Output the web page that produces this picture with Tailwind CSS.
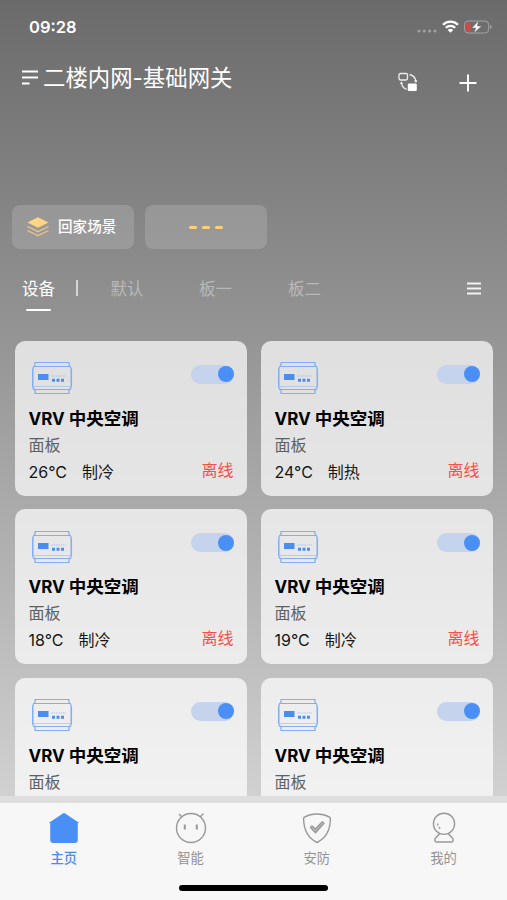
<!DOCTYPE html>
<html lang="zh-CN">
	<head>
		<meta charset="UTF-8" />
		<meta name="viewport" content="width=device-width, initial-scale=1.0" />
		<title>主页</title>

		<script src="https://cdn.jsdelivr.net/npm/@tailwindcss/browser@4"></script>
		<script>
			document.addEventListener('DOMContentLoaded', () => {
				const list = document.getElementById('list')

				const devices = [
					{ temp: '26°C', mode: '制冷' },
					{ temp: '24°C', mode: '制热' },
					{ temp: '18°C', mode: '制冷' },
					{ temp: '19°C', mode: '制冷' },
					{},
					{},
				]

				devices.forEach((i) => {
					let li = document.createElement('li')
					li.className =
						'h-[155px] rounded-[10px] bg-white/70 pl-[14px] pr-[13px] pt-5'

					li.innerHTML = `
						<div class="flex h-[45px] items-start justify-between">
							<svg class="ml-[3px] mt-[.5px] h-[34px] w-[41px]" viewBox="0 0 41 34" fill="none" stroke="#82aef5" stroke-width="1.1">
								<path d="M3 5.5V1.5H37V5.5M3 28.5V32.5H37V28.5M1.5 5.5H38.500L39.500 9V25L38.500 28.500H1.500L.5 25V9Z" />
								<path d="M3.500 1.500L1.500 6.500V25L3.500 32M36.500 1.500L38.500 6.500V25L36.500 32M1.500 25.500H38.500" stroke-width=".8" opacity=".6" />
								<path d="M6 13h10.500v6H6z" fill="#4b8cf0" stroke="none" />
								<path d="M19.500 15H34" stroke-dasharray="1.500 .8" opacity=".6" />
								<path d="M20 17.800h3v3h-3zM24.500 17.800h3v3h-3zM29 17.800h3v3h-3z" fill="#4b8cf0" stroke="none" />
							</svg>
							<div class="mt-1 flex h-[19px] w-[43px] items-center justify-end rounded-full bg-[#c6d3ec]">
								<span class="size-4 rounded-full bg-[#4a8ff5]"></span>
							</div>
						</div>
						<p class="h-[26px] text-[17.5px] leading-[25px] font-bold text-black"><span class="mr-[4px] text-[17px]">VRV</span><span>中央空调</span></p>
						<p class="h-[26px] text-base leading-[26px] text-[#606060]">面板</p>
						${
							i.temp
								? `<div class="flex h-[26px] justify-between pt-px text-base leading-[26px] text-[#151515]">
									<p><span class="mr-[15px]">${i.temp}</span>${i.mode}</p>
									<p class="-mt-[2px] text-[#f5504a]">离线</p>
								</div>`
								: ''
						}`

					list.appendChild(li)
				})
			})
		</script>
	</head>
	<body
		class="flex h-[900px] w-[507px] flex-col overflow-hidden bg-linear-to-b from-[#6b6b6b] to-[#dfdfdf] font-['Inter','Noto_Sans_CJK_SC',sans-serif] text-white"
	>
		<!-- status bar -->
		<div class="flex h-[54px] shrink-0 items-center justify-between pl-[29px] pr-[15px]">
			<span class="text-[16.500px] font-semibold">09:28</span>
			<div class="flex items-center">
				<svg class="mt-[7px] mr-[5px] h-1 w-5" viewBox="0 0 20 4" fill="#a0a0a0">
					<circle cx="2" cy="2" r="1.6" />
					<circle cx="7.300" cy="2" r="1.6" />
					<circle cx="12.600" cy="2" r="1.6" />
					<circle cx="18" cy="2" r="1.6" />
				</svg>
				<svg class="-mt-[2px] h-[13px] w-[17px]" viewBox="0 0 17 13" fill="none" stroke="#fff" stroke-width="2.300">
					<path d="M1 4.800C5.200.6 11.800.6 16 4.800M3.800 7.800C6.400 5.200 10.600 5.200 13.200 7.800" />
					<path d="M5.700 9.900C7.300 8.400 9.700 8.400 11.300 9.900L8.500 12.800Z" fill="#fff" stroke="none" />
				</svg>
				<svg class="ml-[5px] h-[14px] w-7" viewBox="0 0 28 14">
					<rect x=".6" y="1" width="24" height="12" rx="3.500" fill="none" stroke="#a5a5a5" />
					<path d="M26 5v4q1.700-.5 1.700-2T26 5" fill="#a5a5a5" />
					<rect x="2.200" y="2.700" width="4.300" height="8.600" rx="1.500" fill="#d9483f" />
					<path d="M14.700.8L7.800 8h4l-2 5.300L17.600 6h-4.300Z" fill="#fff" stroke="#6e6e6e" stroke-width=".5" />
				</svg>
			</div>
		</div>

		<!-- gateway title -->
		<header class="flex h-[151px] shrink-0 items-start pl-[22px] pr-[30px] pt-2">
			<svg class="mt-2 h-4 w-4" viewBox="0 0 16 16" fill="none" stroke="#fff" stroke-width="2">
				<path d="M0 1.500H16M0 7.500H16M0 13.500H7.500" />
			</svg>
			<h1 class="ml-[5px] mt-px text-[22.4px] leading-[30px] font-normal">二楼内网-基础网关</h1>
			<svg class="ml-auto mt-[10px] h-5 w-5" viewBox="0 0 20 20" fill="none" stroke="#eee" stroke-width="1.300">
				<rect x="1" y="1.500" width="8.500" height="6.500" rx="1.500" />
				<path d="M11.500 2.500C15.500 3.300 17.500 5.800 18 9.500M3.500 11C4 14.500 5.500 16.500 8.800 17.500" />
				<path d="M16 8.500h3.500l-1.500 2.300ZM1.800 11.700L3.400 9.500l1.700 2.200Z" fill="#fff" stroke="none" />
				<rect x="9.800" y="11.500" width="9" height="7.500" rx="1.200" fill="#fff" stroke="none" />
			</svg>
			<svg class="ml-[41px] mt-3 h-[18px] w-[18px]" viewBox="0 0 18 18" stroke="#fff" stroke-width="1.900">
				<path d="M9 .5V17.500M.5 9H17.500" />
			</svg>
		</header>

		<!-- scenes -->
		<div class="flex h-11 shrink-0 gap-[11px] pl-3">
			<div class="flex w-[122px] items-center rounded-lg bg-white/15 pl-[15px]">
				<svg class="h-5 w-[22px]" viewBox="0 0 22 20" fill="none" stroke="#e9c586" stroke-width="1.300">
					<path d="M11 .3L21.500 5.500L11 10.800L.5 5.500Z" fill="#ffd483" stroke="none" />
					<path d="M.5 9.500L11 14.700L21.500 9.500M.5 13.500L11 18.700L21.500 13.500" />
				</svg>
				<span class="ml-[9px] mt-[2px] text-[14.600px] font-medium">回家场景</span>
			</div>
			<div class="flex w-[122px] items-center justify-center gap-[5px] rounded-lg bg-white/15">
				<i class="h-[3px] w-2 rounded-full bg-[#ffd07a]"></i>
				<i class="h-[3px] w-2 rounded-full bg-[#ffd07a]"></i>
				<i class="h-[3px] w-2 rounded-full bg-[#ffd07a]"></i>
			</div>
		</div>

		<!-- room tabs -->
		<nav class="flex h-[91.700px] shrink-0 items-start pl-[22px] pr-[26px] pt-[28px] text-[16.500px] leading-6 text-[#b8b8b8]">
			<div class="flex flex-col items-center text-white">
				<span>设备</span>
				<i class="mt-[8px] h-[2px] w-[25px] rounded-full bg-white"></i>
			</div>
			<i class="ml-[20.500px] mt-[3px] h-4 w-[2px] bg-[#d5d5d5]"></i>
			<span class="ml-[33px]">默认</span>
			<span class="ml-[55.500px]">板一</span>
			<span class="ml-[56px]">板二</span>
			<svg class="ml-auto mt-[5px] h-[13px] w-[14px]" viewBox="0 0 14 13" stroke="#f2f2f2" stroke-width="1.800">
				<path d="M0 1.500H14M0 6.500H14M0 11.500H14" />
			</svg>
		</nav>

		<!-- devices -->
		<main class="min-h-0 flex-1 overflow-hidden px-[14.500px]">
			<ul class="grid grid-cols-2 gap-x-[14px] gap-y-[13.500px]" id="list"></ul>
		</main>

		<!-- bottom tab bar -->
		<footer class="h-[104px] shrink-0 border-t-[7px] border-[#dedede] bg-[#f7f7f7] text-[13.300px] leading-5 text-[#949494]">
			<div class="grid h-[82px] grid-cols-4 pt-[9px]">
				<div class="flex flex-col items-center gap-1 text-[#4a8cf0]">
					<svg class="ml-px h-8 w-8" viewBox="0 0 32 32" fill="#4a8ff5">
						<path d="M16 .7L31.300 11H29.800V28Q29.800 31 26.800 31H5.200Q2.200 31 2.200 28V11H.7Z" />
					</svg>
					<span class="ml-px font-medium">主页</span>
				</div>
				<div class="flex flex-col items-center gap-1">
					<svg class="ml-px h-8 w-8" viewBox="0 0 32 32" fill="none" stroke="#999" stroke-width="1.400">
						<circle cx="16" cy="16" r="14.500" />
						<path d="M6.700 4.800L4 2M25.300 4.800L28.500 1.500" />
						<path d="M9.800 12.500V17.500M21.800 12.500V17.500" stroke-width="2" />
					</svg>
					<span class="ml-px">智能</span>
				</div>
				<div class="flex flex-col items-center gap-1">
					<svg class="h-8 w-8" viewBox="0 0 32 32" fill="none" stroke="#999" stroke-width="1.400" stroke-linejoin="round">
						<path d="M16 2C20.500 2 25 3.200 28.500 5.200Q29.500 5.800 29.400 7C29.200 18 25 26 16 30.500C7 26 2.800 18 2.600 7Q2.500 5.800 3.500 5.200C7 3.200 11.500 2 16 2Z" />
						<path d="M9.500 15.500L11 14L14.500 17L21.300 9.700L23 11.300L14.500 20.800Z" fill="#bbb" />
					</svg>
					<span>安防</span>
				</div>
				<div class="flex flex-col items-center gap-1">
					<svg class="h-8 w-8" viewBox="0 0 32 32" fill="none" stroke="#999" stroke-width="1.400" stroke-linejoin="round">
						<circle cx="16" cy="11.800" r="10.600" />
						<path d="M11.500 21.800C10 24.500 6.800 25 6.800 28Q6.800 30 8.800 30H23.200Q25.200 30 25.200 28C25.200 25 22 24.500 20.500 21.800" />
						<path d="M9.500 11.500Q10 16 14 17.500" stroke-dasharray="2 2" />
					</svg>
					<span>我的</span>
				</div>
			</div>
			<div class="mx-auto h-[6px] w-[149px] rounded-full bg-black"></div>
		</footer>
	</body>
</html>
